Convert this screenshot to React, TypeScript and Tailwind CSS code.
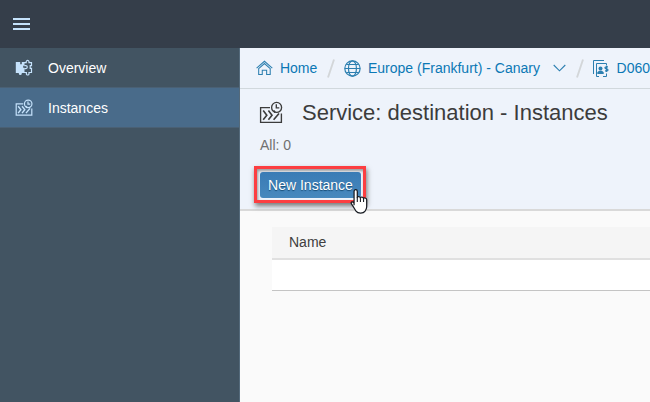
import React from "react";

function MenuIcon() {
  return (
    <svg width="18" height="14" viewBox="0 0 18 14" fill="#c5e2fb" shapeRendering="crispEdges">
      <path d="M0 1h17v2H0zM0 6h17v2H0zM0 11h17v2H0z" />
    </svg>
  );
}

function PuzzleIcon() {
  return (
    <svg width="18" height="18" viewBox="0 0 18 18" fill="none" stroke="#c5e2fb" strokeWidth="1.200">
      <path d="M.8 3h4.400v2.200h1.600V3h2.700v3.700H8.200v2h1.300V14H6.800v.6a1.500 1.500 0 1 1-3 0V14H.8z" fill="#c5e2fb" stroke="none" />
      <path d="M9 3.600h2.200v-.8a1.400 1.400 0 1 1 2.800 0v.8h2.500v3.100h-1.300v2.600h1.300v4.200H14v1.200a1.300 1.300 0 1 1-2.600 0v-1.200H9M9.300 6.600h1.500a1.500 1.500 0 1 1 0 3H9.300" />
    </svg>
  );
}

function InstancesIcon({ size, color, stroke }: { size: number; color: string; stroke: number }) {
  return (
    <svg width={size} height={size} viewBox="0 0 24 24" fill="none" stroke={color} strokeWidth={stroke} className="shrink-0">
      <path d="M11 6.600H1.600V21.400H22.400V12.500" />
      <path d="M4.200 9.600l3.600 4.600-3.600 4.600M9.400 9.600l3.600 4.600-3.600 4.600M14.600 9.600l1.600 2M20 12.500l-5.400 6.300" strokeWidth={stroke * 1.2} />
      <circle cx="17.600" cy="6.400" r="5" />
      <path d="M17.300 3.300v3.500h3" />
    </svg>
  );
}

function HomeIcon() {
  return (
    <svg width="17" height="16" viewBox="0 0 17 16" fill="none" stroke="#2c7fb0" strokeWidth="1.050">
      <path d="M.6 8.200l7.900-7 7.900 7M2.700 8.700l5.800-5.200 5.800 5.200M2.700 8.300v6.200h3.600v-4.200h4.400v4.200h3.600V8.300" />
    </svg>
  );
}

function GlobeIcon() {
  return (
    <svg width="17" height="17" viewBox="0 0 17 17" fill="none" stroke="#2c7fb0" strokeWidth="1.200">
      <circle cx="8.500" cy="8.500" r="7.700" />
      <ellipse cx="8.500" cy="8.500" rx="4" ry="7.700" />
      <path d="M.8 8.500h15.400M2.400 4.500h12.200M2.400 12.500h12.200" />
    </svg>
  );
}

function AccountIcon() {
  return (
    <svg width="17" height="17" viewBox="0 0 17 17" fill="none" stroke="#2c7fb0">
      <path d="M.5 14V.5h10.500M6 16.500H3.500v-13H13.500v1.500M13.500 13.500v3H10" />
      <circle cx="7.500" cy="8.500" r="2" fill="#2c7fb0" stroke="none" />
      <path d="M4.300 14v-1.800l1.800-1.400h2.800l1.800 1.400V14z" fill="#2c7fb0" stroke="none" />
      <path d="M15 6.900h-1.700q-1.500 0-1.300 1 .1.700 1.500.9 1.500.2 1.500 1.100 0 1-1.500 1H12M13.500 5.500v6.500" strokeWidth="1.200" />
    </svg>
  );
}

function Slash() {
  return (
    <svg width="8" height="19" viewBox="0 0 8 19" stroke="#d3d6d9" strokeWidth="1.900" className="shrink-0">
      <path d="M7 .5L1 18.500" />
    </svg>
  );
}

function HandCursor() {
  return (
    <svg className="absolute left-[92px] top-[19px]" width="22" height="27" viewBox="0 0 20 25">
      <path
        d="M4.500 15.500V3.200C4.500 1 7.500 1 7.500 3.200V9c0-1.600 2.900-1.400 2.900.4 0-1.500 2.900-1.200 2.900.5 0-1.200 2.900-.8 2.900 1v6.500c0 2-1 3.300-1.700 4.300-1.500 2.200-6.500 2-8 0-1.200-1.600-2.300-4-4.100-6.500-1.600-2.300.3-3 2.100-1.200z"
        fill="#fff"
        stroke="#171b22"
        strokeWidth="1.150"
        strokeLinejoin="round"
      />
      <path d="M7.500 8.500v4.500M10.400 9.500V13M13.300 10v3" stroke="#171b22" />
    </svg>
  );
}

export default function App() {
  return (
    <div className="flex h-[402px] w-[650px] flex-col overflow-hidden bg-[#fafafa] font-['Liberation_Sans',Arial,sans-serif] text-sm">
      <header className="flex h-12 shrink-0 items-center bg-[#353e4a] pl-[13px]">
        <MenuIcon />
      </header>
      <div className="flex min-h-0 flex-1">
        <nav className="w-60 shrink-0 border-r border-[#546a7b] bg-[#425462] text-white">
          <div className="flex h-10 items-center border-b border-[#4a6074] pl-[15px]">
            <PuzzleIcon />
            <span className="ml-[15px]">Overview</span>
          </div>
          <div className="flex h-10 items-center border-b border-[#4a6074] bg-[#496b8a] pl-[15px]">
            <InstancesIcon size={18} color="#c5e2fb" stroke={1.6} />
            <span className="ml-[15px]">Instances</span>
          </div>
        </nav>
        <main className="min-w-0 flex-1">
          <section className="h-[163px] border-b-2 border-[#d9d9d9] bg-[#eef3fb]">
            <div className="flex h-[41px] items-center overflow-hidden whitespace-nowrap border-b border-[#d1d8dd] pl-4 text-[#0b78b5]">
              <HomeIcon />
              <span className="ml-[7px] w-[38px]">Home</span>
              <span className="ml-[9px] mr-[9px] flex"><Slash /></span>
              <GlobeIcon />
              <span className="ml-[7.4px] w-[172px]">Europe (Frankfurt) - Canary</span>
              <svg className="ml-[12.6px] shrink-0" width="13" height="8" viewBox="0 0 13 8" fill="none" stroke="#2c7fb0" strokeWidth="1.100">
                <path d="M.7 1l5.800 5.800L12.300 1" />
              </svg>
              <span className="ml-[10px] mr-[9px] flex"><Slash /></span>
              <span className="shrink-0"><AccountIcon /></span>
              <span className="ml-[7px]">D060</span>
            </div>
            <div className="flex h-12 items-center pl-[19px] text-[22px] text-[#3c3c3c]">
              <InstancesIcon size={24} color="#3c3c3c" stroke={1.35} />
              <h1 className="ml-[19px] whitespace-nowrap">Service: destination - Instances</h1>
            </div>
            <p className="h-[29px] pl-5 leading-4 text-[#707070]">All: 0</p>
            <div className="relative ml-[14px] h-[37px] w-[112px] border-3 border-[#fc3e41] p-[3px] shadow-[1px_3px_5px_#777,inset_1px_2px_3px_#999]">
              <button className="block h-[26px] w-[101px] rounded-[3px] bg-linear-to-b from-[#397bb5] to-[#4788bd] text-center text-white [text-shadow:0_1px_1px_#174b75]">
                New Instance
              </button>
              <HandCursor />
            </div>
          </section>
          <div className="ml-8 mt-4">
            <div className="flex h-[33px] items-center border-b-2 border-[#e0e0e0] bg-[#f5f5f5] pb-px pl-[17px] text-[#404040]">Name</div>
            <div className="h-[31px] border-b border-[#c4c4c4] bg-white" />
          </div>
        </main>
      </div>
    </div>
  );
}
